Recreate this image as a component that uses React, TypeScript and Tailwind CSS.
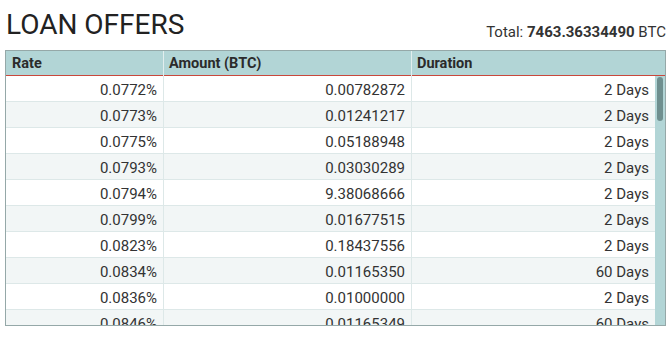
import React from "react";

const offers = [
  ["0.0772%", "0.00782872", "2 Days"],
  ["0.0773%", "0.01241217", "2 Days"],
  ["0.0775%", "0.05188948", "2 Days"],
  ["0.0793%", "0.03030289", "2 Days"],
  ["0.0794%", "9.38068666", "2 Days"],
  ["0.0799%", "0.01677515", "2 Days"],
  ["0.0823%", "0.18437556", "2 Days"],
  ["0.0834%", "0.01165350", "60 Days"],
  ["0.0836%", "0.01000000", "2 Days"],
  ["0.0846%", "0.01165349", "60 Days"],
];

function App() {
  return (
    <div className="flex flex-col font-['Roboto',sans-serif] text-[#333] bg-white w-[667px] h-[338px]">
      <div className="flex items-end justify-between pl-[6px] pr-[1px] pt-[8px]">
        <h1 className="text-[28px] leading-[34px] text-[#222]">LOAN OFFERS</h1>
        <div className="text-[15px] leading-[20px]">
          Total: <span className="font-bold">7463.36334490</span> BTC
        </div>
      </div>

      <div className="mt-[8px] ml-[5px] w-[661px] border border-[#95a8a8]">
        <div className="grid grid-cols-[158px_248px_1fr] h-[25px] bg-[#b2d5d6] border-b border-[#c9483c] text-[14.5px] font-bold leading-[25px] text-[#2b2b2b]">
          <div className="pl-[6px] border-r border-[#e2eeee]">Rate</div>
          <div className="pl-[5px] border-r border-[#e2eeee]">Amount (BTC)</div>
          <div className="pl-[5px]">Duration</div>
        </div>

        <div className="flex h-[249px] overflow-hidden">
          <div className="flex-1 flex flex-col text-[15px] leading-[21px]">
            {offers.map(([rate, amount, duration], i) => (
              <div
                key={rate}
                className={`grid grid-cols-[158px_248px_1fr] shrink-0 h-[26px] border-b border-[#dde8e8] ${
                  i % 2 === 1 ? "bg-[#f2f6f6]" : "bg-white"
                }`}
              >
                <div className="text-right pt-[4px] pr-[6px] border-r border-[#dde8e8]">{rate}</div>
                <div className="text-right pt-[4px] pr-[6px] border-r border-[#dde8e8]">{amount}</div>
                <div className="text-right pt-[4px] pr-[6px]">{duration}</div>
              </div>
            ))}
          </div>
          <div className="w-[10px] bg-[#b2d5d6] flex justify-center pt-[1px]">
            <div className="w-[6px] h-[44px] rounded-[3px] bg-[#6f8f8f]" />
          </div>
        </div>
      </div>
    </div>
  );
}

export default App;
